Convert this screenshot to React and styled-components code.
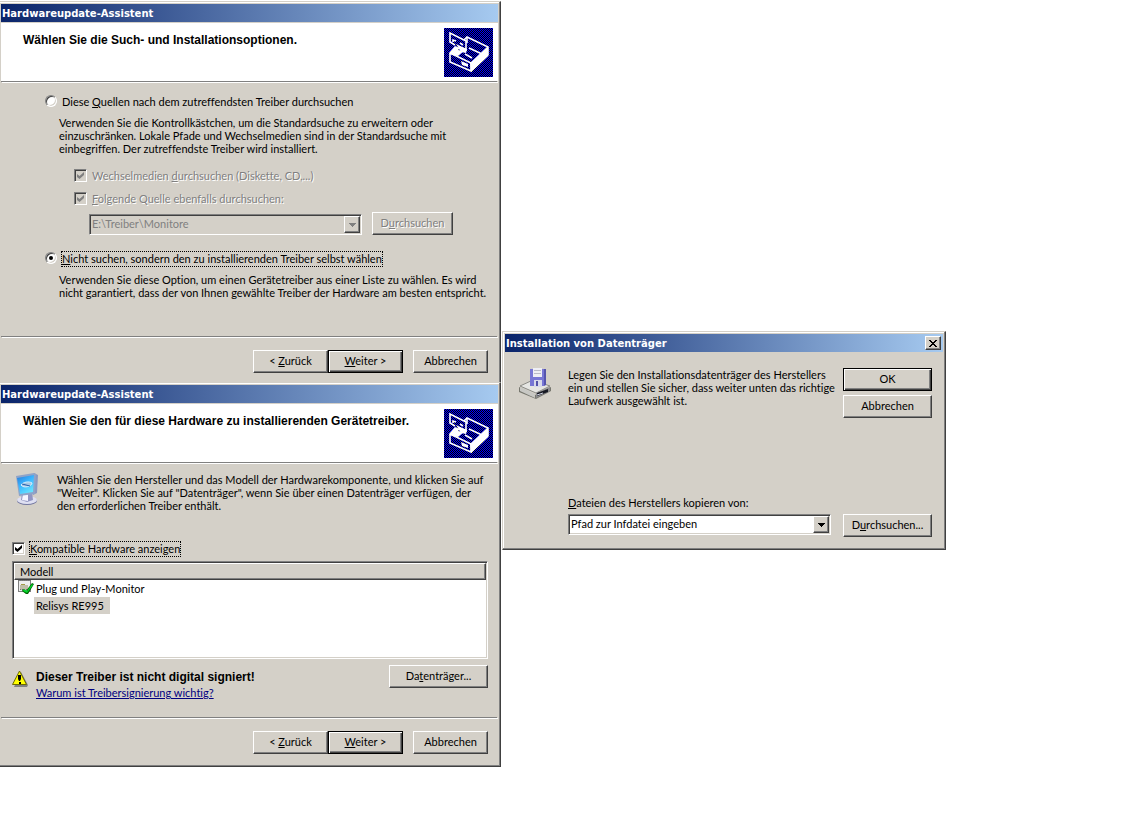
import styled, { createGlobalStyle, css } from "styled-components";

const face = "#d4d0c8";
const shadow = "#808080";
const dark = "#404040";
const boldFont = '"Liberation Sans", Arial, sans-serif';

const GlobalStyle = createGlobalStyle`
  body {
    margin: 0;
    background: white;
    color: black;
    font-family: Lato, "Liberation Sans", sans-serif;
    font-size: 11px;
    font-variant-ligatures: none;
    line-height: 13px;
  }

  button, input, select {
    margin: 0;
    font: inherit;
    color: inherit;
  }
`;

const Desktop = styled.main`
  display: grid;
  grid-template-columns:
    minmax(0, 501fr) minmax(0, 444fr)
    minmax(0, 183fr);
  column-gap: 1px;
  align-items: start;
  padding-top: 1px;
`;

const WizardStack = styled.div`
  display: flex;
  flex-direction: column;
`;

const Window = styled.section`
  box-sizing: border-box;
  min-width: 0;
  background: ${face};
  border: 1px solid;
  border-color: ${face} ${dark} ${dark} ${face};
  box-shadow: inset -1px -1px ${shadow}, inset 1px 1px white;
  padding: 2px 2px 1px;
`;

const WizardWindow = styled(Window)`
  border-left: none;
  box-shadow: inset -1px -1px ${shadow}, inset 0 1px white;
  padding-left: 1px;

  ${(props) =>
    props.$covered &&
    css`
      border-bottom: none;
      box-shadow: inset -1px 0 ${shadow}, inset 0 1px white;
      padding-bottom: 0;
    `}
`;

const DialogWindow = styled(Window)`
  margin-top: 330px;
`;

const TitleBar = styled.div`
  display: flex;
  align-items: center;
  justify-content: space-between;
  height: 18px;
  padding: 0 2px 0 1px;
  background: linear-gradient(to right, #0a246a, #a6caf0);
`;

const Title = styled.h1`
  margin: 0;
  color: white;
  font-family: "DejaVu Sans", Tahoma, sans-serif;
  font-size: 10px;
  font-weight: bold;
  white-space: nowrap;
`;

const bevel = css`
  border: 1px solid;
  border-color: white ${dark} ${dark} white;
  box-shadow: inset -1px -1px ${shadow};
  background: ${face};
`;

const CloseButton = styled.button`
  ${bevel}
  display: flex;
  align-items: center;
  justify-content: center;
  box-sizing: border-box;
  width: 16px;
  height: 14px;
  padding: 0;
`;

const Header = styled.header`
  display: flex;
  justify-content: space-between;
  margin-top: 1px;
  padding: 5px 5px 4px 22px;
  background: white;
`;

const Heading = styled.h2`
  margin: 6px 0 0;
  font-family: ${boldFont};
  font-size: 12px;
  font-weight: bold;
  white-space: nowrap;
`;

const Rule = styled.hr`
  height: 1px;
  margin: 0 1px 1px 0;
  border: none;
  background: ${shadow};
  box-shadow: 1px 1px white;
`;

const Button = styled.button`
  ${bevel}
  box-sizing: border-box;
  width: ${(props) => props.$width}px;
  height: 23px;
  padding: 0 0 3px;
  white-space: nowrap;

  ${(props) =>
    props.$primary &&
    css`
      border-color: black;
      box-shadow: inset 1px 1px white, inset -1px -1px ${dark},
        inset -2px -2px ${shadow};
    `}

  &:disabled {
    color: ${shadow};
    text-shadow: 1px 1px white;
  }
`;

const Footer = styled.footer`
  display: flex;
  justify-content: flex-end;
  padding: 12px 10px ${(props) => props.$bottom}px;
`;

const CancelButton = styled(Button)`
  margin-left: 10px;
`;

const OptionsBody = styled.div`
  padding: 11px 10px 37px 44px;
`;

const Option = styled.div`
  display: flex;
  align-items: flex-start;
  height: 16px;
  margin-top: ${(props) => props.$top || 0}px;

  input {
    flex: none;
    box-sizing: border-box;
    margin-top: 1px;
  }
`;

const Label = styled.label`
  padding: 0 0 1px;
  margin-left: 4px;
  border: 1px dotted ${(props) => (props.$focused ? "black" : "transparent")};
  line-height: 13px;
  white-space: nowrap;

  ${(props) =>
    props.$disabled &&
    css`
      color: ${shadow};
      text-shadow: 1px 1px white;
    `}
`;

const Radio = styled.input`
  appearance: none;
  display: grid;
  place-items: center;
  width: 12px;
  height: 12px;
  border: 1px solid;
  border-color: ${shadow} white white ${shadow};
  border-radius: 50%;
  background: white;
  box-shadow: inset 1px 1px ${dark}, inset -1px -1px ${face};

  &:checked::before {
    content: "";
    width: 4px;
    height: 4px;
    border-radius: 50%;
    background: black;
  }
`;

const Checkbox = styled.input`
  appearance: none;
  display: grid;
  place-items: center;
  width: 13px;
  height: 13px;
  border: 1px solid;
  border-color: ${shadow} white white ${shadow};
  background: white;
  box-shadow: inset 1px 1px ${dark}, inset -1px -1px ${face};

  &:checked::before {
    content: "";
    width: 7px;
    height: 7px;
    background: black;
    clip-path: polygon(0 29%, 36% 57%, 100% 0, 100% 43%, 36% 100%, 0 71%);
  }

  &:disabled {
    background: ${face};
  }

  &:disabled::before {
    background: ${shadow};
  }
`;

const Description = styled.p`
  margin: 6px 0 0 14px;
  white-space: nowrap;
`;

const SubOptions = styled.div`
  margin: 13px 0 0 29px;
`;

const SourceRow = styled.div`
  display: flex;
  align-items: flex-end;
  gap: 10px;
  margin: 5px 35px 16px 15px;
`;

const Combo = styled.div`
  display: grid;
  grid-template-columns: 1fr 16px;
  flex: 1;
  box-sizing: border-box;
  height: 21px;
  padding: 1px;
  border: 1px solid;
  border-color: ${shadow} white white ${shadow};
  box-shadow: inset 1px 1px ${dark}, inset -1px -1px ${face};
  background: ${(props) => (props.$disabled ? face : "white")};
`;

const Select = styled.select`
  appearance: none;
  grid-area: 1 / 1 / 2 / 3;
  min-width: 0;
  padding: 0 17px 2px 1px;
  border: none;
  border-radius: 0;
  background: transparent;
  outline: none;

  &:disabled {
    color: ${shadow};
    opacity: 1;
  }
`;

const Arrow = styled.span`
  ${bevel}
  grid-area: 1 / 2 / 2 / 3;
  display: flex;
  align-items: center;
  justify-content: center;
  color: ${(props) => (props.$disabled ? shadow : "black")};
  pointer-events: none;
`;

const ModelBody = styled.div`
  padding: 9px 10px 17px 11px;
`;

const Intro = styled.div`
  display: flex;
  gap: 18px;
  margin-bottom: 29px;
  padding-left: 3px;
`;

const Text = styled.p`
  margin: 0;
  white-space: nowrap;
`;

const ModelList = styled.div`
  box-sizing: border-box;
  min-height: 98px;
  margin: 4px 0 6px;
  padding: 1px;
  border: 1px solid;
  border-color: ${shadow} white white ${shadow};
  box-shadow: inset 1px 1px ${dark}, inset -1px -1px ${face};
  background: white;
`;

const Table = styled.table`
  width: 100%;
  border-collapse: separate;
  border-spacing: 0;

  th {
    ${bevel}
    height: 15px;
    padding: 0 5px;
    font-weight: normal;
    text-align: left;
  }

  td {
    height: 17px;
    padding: 0 0 0 4px;
  }
`;

const Model = styled.div`
  display: flex;
  height: 17px;
  line-height: 17px;
`;

const ModelIcon = styled.span`
  width: 16px;
`;

const ModelName = styled.span`
  padding: 0 6px 0 2px;
  background: ${(props) => (props.$selected ? face : "transparent")};
`;

const SignatureRow = styled.div`
  display: flex;
  align-items: flex-start;

  > svg {
    margin-top: 5px;
  }
`;

const Signature = styled.div`
  flex: 1;
  display: flex;
  flex-direction: column;
  align-items: flex-start;
  gap: 2px;
  margin: 6px 0 1px 8px;

  strong {
    font-family: ${boldFont};
    font-size: 12px;
  }
`;

const Link = styled.a`
  color: #000080;
`;

const DialogBody = styled.div`
  display: grid;
  grid-template-columns: 49px minmax(0, 1fr) 89px;
  padding: 16px 11px 11px 14px;
`;

const DialogButtons = styled.div`
  display: flex;
  flex-direction: column;
  gap: 4px;
  margin-bottom: 78px;
`;

const PathField = styled.div`
  grid-column: 2;
  display: flex;
  flex-direction: column;
  gap: 5px;
  margin-right: 12px;

  ${Combo} {
    flex: none;
  }
`;

const BrowseCell = styled.div`
  padding-top: 18px;
`;

function WizardIcon() {
  return (
    <svg width="49" height="49" viewBox="0 0 49 49" aria-hidden="true">
      <defs>
        <pattern id="dither" width="2" height="2" patternUnits="userSpaceOnUse">
          <path fill="#0000ff" d="M0 0h2v2H0z" />
          <path fill="#000" d="M1 0h1v1H1zM0 1h1v1H0z" />
        </pattern>
      </defs>
      <path
        fill="url(#dither)"
        shapeRendering="crispEdges"
        d="M0 0h49v49H0z"
      />
      <g fill="none" stroke="white" strokeWidth="1.6">
        <path d="M6 25V34L27 43V35L6 25" />
        <path d="M20 12L23 9L44 19V27L27 43" />
        <path d="M11 17L6 14V5L22 13V22L17 20" />
        <path d="M21 26L28 30M25 20L38 26M23 9V15" />
        <path d="M9 14V12L12 13M16 15L19 17" />
      </g>
      <g fill="white">
        <path d="M26 35L44 18V28L27 44z" />
        <path d="M5 25L11 18L16 20L14 22L20 23L14 28L8 27z" />
        <path d="M12 16L23 21L22 25L17 24z" />
        <path d="M17 33L24 36V39L18 37z" />
      </g>
    </svg>
  );
}

function MonitorIcon() {
  return (
    <svg width="24" height="33" viewBox="0 0 24 33" aria-hidden="true">
      <defs>
        <linearGradient id="screen" x1="0" y1="0" x2="0.6" y2="1">
          <stop offset="0" stopColor="#2878d8" />
          <stop offset="0.5" stopColor="#39b5ff" />
          <stop offset="1" stopColor="#65e2ff" />
        </linearGradient>
      </defs>
      <ellipse cx="12" cy="28" rx="10" ry="4" fill="#7377a0" />
      <ellipse cx="12" cy="27" rx="10" ry="4" fill="#dfe0f2" />
      <path fill="#9296c2" d="M7 20l10-1 1 8-6 2-6-2z" />
      <path fill="#f6f6ff" d="M8 21h5v7l-6-1z" />
      <path fill="#8c98bd" d="M19 0l4 2-1 18-4 2z" />
      <path fill="#8fa3c8" d="M1 3L19 0l2 1-1 20-16 2z" />
      <path fill="url(#screen)" d="M2 5l17-3-1 17L5 21z" />
      <path
        fill="#a9c6e2"
        stroke="#d5efff"
        d="M6 12c2-3 8-4 11-2 0 3-8 6-11 2"
      />
      <path stroke="#205daf" d="M7 11l8 2" />
    </svg>
  );
}

function DiskIcon() {
  return (
    <svg width="32" height="32" viewBox="0 0 32 32" aria-hidden="true">
      <path fill="#77776f" d="M0 19l16 8 16-8v4l-15 8L0 24z" />
      <path fill="#e6e6e3" stroke="#8c8c87" d="M1 18l13-6 17 6-14 7z" />
      <path fill="#c8c8c4" d="M1 19l15 7v4L1 23z" />
      <path fill="#8c8c8e" d="M17 25l14-6v4l-14 7z" />
      <path fill="#171923" d="M18 25l11-4v3l-11 4z" />
      <path stroke="#d4d7e5" d="M18 27l6-2" />
      <path fill="#5554ad" d="M11 1h16v16l-2 1H11z" />
      <path fill="#7776d5" d="M11 1h14v17H11z" />
      <path fill="#eeeef4" d="M14 0h9v9h-9z" />
      <path fill="#b9bac7" d="M15 2h7v1h-7zM15 5h7v1h-7z" />
      <path fill="#d7d9eb" d="M15 12h8v7h-8z" />
      <path fill="#5352a8" d="M17 13h2v5h-2z" />
    </svg>
  );
}

function DriverIcon() {
  return (
    <svg width="16" height="16" viewBox="0 0 16 16" aria-hidden="true">
      <path fill="#808080" d="M0 0h13v12H0z" />
      <path fill="#eee" d="M1 1h11v10H1z" />
      <path fill="#c0bea8" d="M2 5h8v5H2z" />
      <path stroke="#777" strokeDasharray="1 1" d="M0 .5h13M2 9.5h9" />
      <path stroke="#a39b46" d="M3 4.5h4" />
      <path fill="#006500" d="M5 9l3 2 6-8 2 1-6 10H8L4 11z" />
      <path fill="#00d52b" d="M6 9l3 2 5-7 1 1-6 8-4-2z" />
    </svg>
  );
}

function WarningIcon() {
  return (
    <svg width="16" height="17" viewBox="0 0 16 17" aria-hidden="true">
      <path fill="#808080" d="M9 2l7 13-1 2H2z" />
      <path
        fill="#ffff00"
        stroke="#6c6900"
        strokeLinejoin="round"
        d="M7.5 1L14.5 14.5H.5z"
      />
      <path fill="black" d="M6 5h3v4l-1 2H7L6 9zM7 12h2v2H7z" />
    </svg>
  );
}

function ComboBox({ id, value, disabled, ariaLabel }) {
  return (
    <Combo $disabled={disabled}>
      <Select
        id={id}
        defaultValue={value}
        disabled={disabled}
        aria-label={ariaLabel}
      >
        <option>{value}</option>
      </Select>
      <Arrow $disabled={disabled}>
        <svg width="7" height="4" shapeRendering="crispEdges">
          <path fill="currentColor" d="M0 0h7v1H6v1H5v1H4v1H3V3H2V2H1V1H0z" />
        </svg>
      </Arrow>
    </Combo>
  );
}

function WizardFrame({ heading, covered, children }) {
  return (
    <WizardWindow $covered={covered}>
      <TitleBar>
        <Title>Hardwareupdate-Assistent</Title>
      </TitleBar>
      <Header>
        <Heading>{heading}</Heading>
        <WizardIcon />
      </Header>
      <Rule />
      {children}
      <Rule />
      <Footer $bottom={covered ? 9 : 11}>
        <Button $width={75}>
          &lt; <u>Z</u>urück
        </Button>
        <Button $width={75} $primary>
          <u>W</u>eiter &gt;
        </Button>
        <CancelButton $width={75}>Abbrechen</CancelButton>
      </Footer>
    </WizardWindow>
  );
}

function SearchOptions() {
  return (
    <WizardFrame
      heading='Wählen Sie die Such- und Installationsoptionen.'
      covered
    >
      <OptionsBody>
        <Option>
          <Radio type='radio' name='search' id='search-auto' />
          <Label htmlFor='search-auto'>
            Diese <u>Q</u>uellen nach dem zutreffendsten Treiber durchsuchen
          </Label>
        </Option>
        <Description>
          Verwenden Sie die Kontrollkästchen, um die Standardsuche zu erweitern
          oder
          <br />
          einzuschränken. Lokale Pfade und Wechselmedien sind in der
          Standardsuche mit
          <br />
          einbegriffen. Der zutreffendste Treiber wird installiert.
        </Description>
        <SubOptions>
          <Option>
            <Checkbox type='checkbox' id='removable' defaultChecked disabled />
            <Label htmlFor='removable' $disabled>
              Wechselmedien <u>d</u>urchsuchen (Diskette, CD,...)
            </Label>
          </Option>
          <Option $top={7}>
            <Checkbox type='checkbox' id='source' defaultChecked disabled />
            <Label htmlFor='source' $disabled>
              <u>F</u>olgende Quelle ebenfalls durchsuchen:
            </Label>
          </Option>
          <SourceRow>
            <ComboBox
              value='E:\Treiber\Monitore'
              ariaLabel='Folgende Quelle ebenfalls durchsuchen'
              disabled
            />
            <Button $width={81} disabled>
              D<u>u</u>rchsuchen
            </Button>
          </SourceRow>
        </SubOptions>
        <Option>
          <Radio type='radio' name='search' id='search-manual' defaultChecked />
          <Label htmlFor='search-manual' $focused>
            <u>N</u>icht suchen, sondern den zu installierenden Treiber selbst
            wählen
          </Label>
        </Option>
        <Description>
          Verwenden Sie diese Option, um einen Gerätetreiber aus einer Liste zu
          wählen. Es wird
          <br />
          nicht garantiert, dass der von Ihnen gewählte Treiber der Hardware am
          besten entspricht.
        </Description>
      </OptionsBody>
    </WizardFrame>
  );
}

function DriverSelection() {
  return (
    <WizardFrame heading='Wählen Sie den für diese Hardware zu installierenden Gerätetreiber.'>
      <ModelBody>
        <Intro>
          <MonitorIcon />
          <Text>
            Wählen Sie den Hersteller und das Modell der Hardwarekomponente, und
            klicken Sie auf
            <br />
            "Weiter". Klicken Sie auf "Datenträger", wenn Sie über einen
            Datenträger verfügen, der
            <br />
            den erforderlichen Treiber enthält.
          </Text>
        </Intro>
        <Option>
          <Checkbox type='checkbox' id='compatible' defaultChecked />
          <Label htmlFor='compatible' $focused>
            <u>K</u>ompatible Hardware anzeigen
          </Label>
        </Option>
        <ModelList>
          <Table>
            <thead>
              <tr>
                <th scope='col'>Modell</th>
              </tr>
            </thead>
            <tbody>
              <tr>
                <td>
                  <Model>
                    <ModelIcon>
                      <DriverIcon />
                    </ModelIcon>
                    <ModelName>Plug und Play-Monitor</ModelName>
                  </Model>
                </td>
              </tr>
              <tr>
                <td>
                  <Model>
                    <ModelIcon />
                    <ModelName $selected>Relisys RE995</ModelName>
                  </Model>
                </td>
              </tr>
            </tbody>
          </Table>
        </ModelList>
        <SignatureRow>
          <WarningIcon />
          <Signature>
            <strong>Dieser Treiber ist nicht digital signiert!</strong>
            <Link href='#signierung'>Warum ist Treibersignierung wichtig?</Link>
          </Signature>
          <Button $width={99}>
            Da<u>t</u>enträger...
          </Button>
        </SignatureRow>
      </ModelBody>
    </WizardFrame>
  );
}

function DiskDialog() {
  return (
    <DialogWindow>
      <TitleBar>
        <Title>Installation von Datenträger</Title>
        <CloseButton aria-label='Schließen'>
          <svg width="8" height="7" shapeRendering="crispEdges">
            <path d="M0 0h2v1h1v1h2V1h1V0h2v1H7v1H6v1H5v1h1v1h1v1h1v1H6V6H5V5H3v1H2v1H0V6h1V5h1V4h1V3H2V2H1V1H0z" />
          </svg>
        </CloseButton>
      </TitleBar>
      <DialogBody>
        <DiskIcon />
        <Text>
          Legen Sie den Installationsdatenträger des Herstellers
          <br />
          ein und stellen Sie sicher, dass weiter unten das richtige
          <br />
          Laufwerk ausgewählt ist.
        </Text>
        <DialogButtons>
          <Button $width={89} $primary>
            OK
          </Button>
          <Button $width={89}>Abbrechen</Button>
        </DialogButtons>
        <PathField>
          <label htmlFor='path'>
            <u>D</u>ateien des Herstellers kopieren von:
          </label>
          <ComboBox id='path' value='Pfad zur Infdatei eingeben' />
        </PathField>
        <BrowseCell>
          <Button $width={89}>
            D<u>u</u>rchsuchen...
          </Button>
        </BrowseCell>
      </DialogBody>
    </DialogWindow>
  );
}

function App() {
  return (
    <>
      <GlobalStyle />
      <Desktop>
        <WizardStack>
          <SearchOptions />
          <DriverSelection />
        </WizardStack>
        <DiskDialog />
      </Desktop>
    </>
  );
}

export default App;
